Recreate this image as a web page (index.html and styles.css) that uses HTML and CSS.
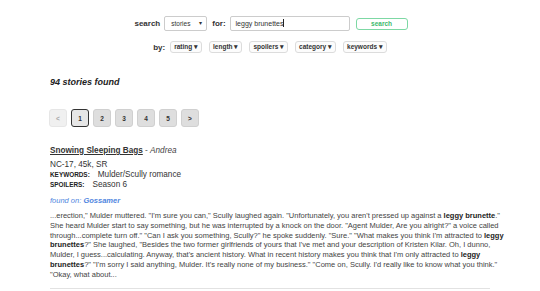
FILE: index.html
```html
<!DOCTYPE html>
<html lang="en">
<head>
    <meta charset="UTF-8">
    <title>Story Search</title>
    <link rel="stylesheet" href="styles.css">
</head>
<body>
    <!-- search line -->
    <div class="search-bar">
        <span class="label">search</span>
        <div class="select">stories <span class="arrow">&#9662;</span></div>
        <span class="label">for:</span>
        <div class="query">leggy brunettes<span class="caret"></span></div>
        <button class="go">search</button>
    </div>

    <!-- filter dropdowns -->
    <div class="filters">
        <span class="label">by:</span>
        <button class="filter">rating &#9662;</button>
        <button class="filter">length &#9662;</button>
        <button class="filter">spoilers &#9662;</button>
        <button class="filter">category &#9662;</button>
        <button class="filter">keywords &#9662;</button>
    </div>

    <div class="results">
        <h2 class="count">94 stories found</h2>

        <div class="pager">
            <button class="page disabled">&lt;</button>
            <button class="page current">1</button>
            <button class="page">2</button>
            <button class="page">3</button>
            <button class="page">4</button>
            <button class="page">5</button>
            <button class="page">&gt;</button>
        </div>

        <div class="story">
            <div class="title"><a href="#">Snowing Sleeping Bags</a> - <em>Andrea</em></div>
            <div class="meta">NC-17, 45k, SR</div>
            <div class="meta"><span class="key">Keywords:</span>Mulder/Scully romance</div>
            <div class="meta"><span class="key">Spoilers:</span>Season 6</div>
            <div class="source">found on: <b>Gossamer</b></div>
            <p class="excerpt">...erection," Mulder muttered. "I'm sure you can," Scully laughed again. "Unfortunately, you aren't pressed up against a <b>leggy brunette</b>." She heard Mulder start to say something, but he was interrupted by a knock on the door. "Agent Mulder, Are you alright?" a voice called through...complete turn off." "Can I ask you something, Scully?" he spoke suddenly. "Sure." "What makes you think I'm attracted to <b>leggy brunettes</b>?" She laughed, "Besides the two former girlfriends of yours that I've met and your description of Kristen Kilar. Oh, I dunno, Mulder, I guess...calculating. Anyway, that's ancient history. What in recent history makes you think that I'm only attracted to <b>leggy brunettes</b>?" "I'm sorry I said anything, Mulder. It's really none of my business." "Come on, Scully. I'd really like to know what you think." "Okay, what about...</p>
        </div>
        <hr class="divider">
    </div>
</body>
</html>
```

FILE: styles.css
```css
body {
    margin: 0;
    font-family: "Liberation Sans", Arial, sans-serif;
    color: #333;
    background-color: #fff;
}

button {
    font-family: inherit;
    cursor: pointer;
}

.label {
    font-size: 8px;
    font-weight: bold;
    color: #333;
}

/* search line */
.search-bar {
    display: flex;
    justify-content: center;
    align-items: center;
    padding-top: 16px;
    height: 15px;
    margin-left: 2px;
}

.select {
    box-sizing: border-box;
    width: 43px;
    height: 15px;
    margin: 0 5px 0 4px;
    padding: 0 4px 0 6px;
    border: 1px solid #ccc;
    border-radius: 2px;
    font-size: 6.5px;
    line-height: 13px;
    display: flex;
    justify-content: space-between;
}

.arrow {
    font-size: 6px;
}

.query {
    box-sizing: border-box;
    width: 120px;
    height: 15px;
    margin: 0 6px 0 4px;
    padding: 0 5px;
    border: 1px solid #ccc;
    border-radius: 2px;
    font-size: 7px;
    line-height: 13px;
    color: #333;
}

.caret {
    display: inline-block;
    width: 1px;
    height: 8px;
    background-color: #222;
    vertical-align: -1px;
}

.go {
    box-sizing: border-box;
    width: 52px;
    height: 12px;
    padding: 0;
    border: 1px solid #7dd8a4;
    border-radius: 3px;
    background-color: #fff;
    color: #3cb96d;
    font-size: 6.5px;
    font-weight: bold;
}

/* filter dropdowns */
.filters {
    display: flex;
    justify-content: center;
    align-items: center;
    gap: 7px;
    margin-top: 10px;
    height: 12px;
}

.filters .label {
    margin-right: -2px;
}

.filter {
    box-sizing: border-box;
    height: 12px;
    padding: 0 3px;
    border: 1px solid #dcdcdc;
    border-radius: 3px;
    background-color: #fcfcfc;
    color: #333;
    font-size: 6.5px;
    font-weight: bold;
    line-height: 10px;
}

/* results */
.results {
    padding: 0 30px 0 50px;
}

.count {
    margin: 24px 0 0;
    font-size: 9px;
    line-height: 11px;
    font-style: italic;
    font-weight: bold;
    color: #222;
}

.pager {
    display: flex;
    gap: 4px;
    margin-top: 21px;
    margin-left: -1px;
}

.page {
    box-sizing: border-box;
    width: 18px;
    height: 18px;
    padding: 0;
    border: 1px solid #d0d0d0;
    border-radius: 3px;
    background-color: #dedede;
    color: #333;
    font-size: 6.5px;
    font-weight: bold;
}

.page.disabled {
    background-color: #f0f0f0;
    border-color: #e6e6e6;
    color: #aaa;
}

.page.current {
    background-color: #e6e6e6;
    border: 1.5px solid #333;
}

.story {
    margin-top: 19px;
    width: 456px;
}

.title {
    font-size: 8.2px;
    line-height: 10px;
    color: #555;
}

.title a {
    color: #333;
    font-weight: bold;
    text-decoration: underline;
}

.title em {
    color: #444;
}

.title + .meta {
    margin-top: 4px;
}

.meta {
    font-size: 8.2px;
    line-height: 10px;
    color: #333;
}

.key {
    display: inline-block;
    margin-right: 8px;
    font-size: 6.4px;
    font-weight: bold;
    text-transform: uppercase;
    color: #222;
}

.source {
    margin-top: 6px;
    font-size: 7.5px;
    line-height: 10px;
    font-style: italic;
    color: #4f86e0;
}

.excerpt {
    margin: 5px 0 0;
    font-size: 7.5px;
    line-height: 9.8px;
    color: #444;
}

.excerpt b {
    color: #222;
}

.divider {
    width: 440px;
    margin: 8px 0 0;
    border: 0;
    border-top: 1px solid #e2e2e2;
}
```
